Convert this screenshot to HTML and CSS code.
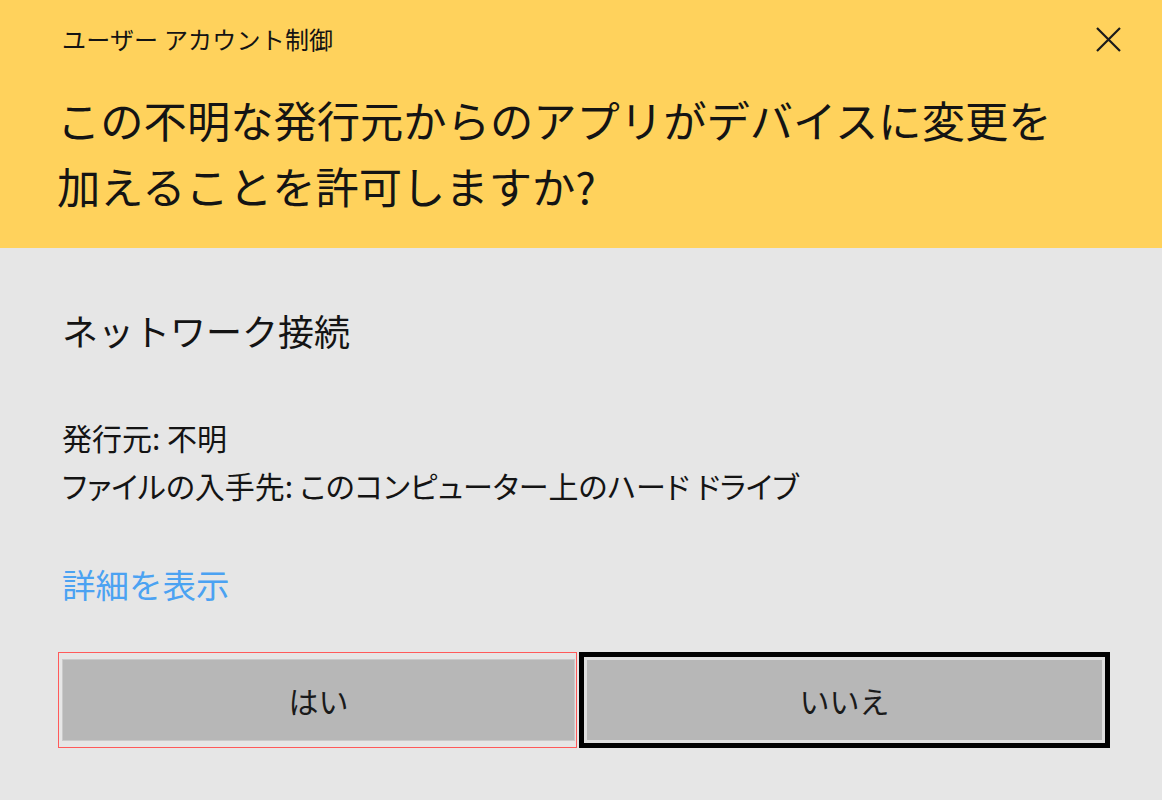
FILE: index.html
```html
<!DOCTYPE html>
<html lang="ja">

<head>
    <meta charset="UTF-8" />
    <meta name="viewport" content="width=device-width, initial-scale=1.0" />
    <title>ユーザー アカウント制御</title>
    <link rel="stylesheet" href="styles.css">
</head>

<body>
    <div class="dialog">
        <!-- Yellow header -->
        <div class="header">
            <div class="title-bar">
                <span class="title">ユーザー アカウント制御</span>
                <span class="close">
                    <svg width="25" height="25" viewBox="0 0 25 25">
                        <path d="M1 1 L24 24 M24 1 L1 24" stroke="#1a1a1a" stroke-width="2.2" fill="none" />
                    </svg>
                </span>
            </div>
            <h1 class="question">この不明な発行元からのアプリがデバイスに変更を<br>加えることを許可しますか?</h1>
        </div>

        <!-- Details -->
        <div class="content">
            <h2 class="app-name">ネットワーク接続</h2>
            <div class="info">
                <p>発行元: 不明</p>
                <p>ファイルの入手先: このコンピューター上のハード ドライブ</p>
            </div>
            <a class="more" href="#">詳細を表示</a>

            <div class="buttons">
                <div class="focus-ring">
                    <button class="btn btn-yes">はい</button>
                </div>
                <button class="btn btn-no">いいえ</button>
            </div>
        </div>
    </div>
</body>

</html>
```

FILE: styles.css
```css
body {
    margin: 0;
    background-color: #e6e6e6;
    color: #141414;
    font-family: "Noto Sans CJK JP", "Noto Sans", sans-serif;
}

.dialog {
    width: 1162px;
    height: 800px;
}

.header {
    background-color: #ffd25c;
    height: 248px;
    box-sizing: border-box;
    padding: 23px 41px 0 62px;
}

.title-bar {
    display: flex;
    justify-content: space-between;
    align-items: center;
    height: 32px;
}

.title {
    font-size: 24px;
    line-height: 32px;
    letter-spacing: 0.2px;
}

.close {
    display: flex;
    width: 25px;
    height: 25px;
    margin-top: 1px;
}

.question {
    margin: 31px 0 0 -5px;
    font-size: 43.3px;
    line-height: 66px;
    font-weight: normal;
    white-space: nowrap;
}

.content {
    padding: 58px 0 0 62px;
}

.app-name {
    margin: 0;
    font-size: 36px;
    line-height: 48px;
    font-weight: normal;
}

.info {
    margin-top: 59px;
    font-size: 30px;
    line-height: 48px;
    font-feature-settings: "palt";
}

.info p {
    margin: 0;
    white-space: nowrap;
}

.more {
    display: block;
    margin-top: 55px;
    font-size: 33.5px;
    line-height: 40px;
    color: #4ba2f2;
    text-decoration: none;
}

.buttons {
    display: flex;
    gap: 2px;
    margin: 48px 0 0 -4px;
    height: 96px;
}

.focus-ring {
    width: 519px;
    box-sizing: border-box;
    border: 1px solid #ff5a5a;
    padding: 6px 1px 6px 3px;
    display: flex;
}

.btn {
    font-family: inherit;
    font-size: 30px;
    color: #1a1a1a;
    background-color: #b7b7b7;
    cursor: pointer;
}

.btn-yes {
    flex: 1;
    border: 1px solid #cacaca;
}

.btn-no {
    width: 531px;
    border: 5px solid #000;
    box-shadow: inset 0 0 0 3px #dedede;
}
```
